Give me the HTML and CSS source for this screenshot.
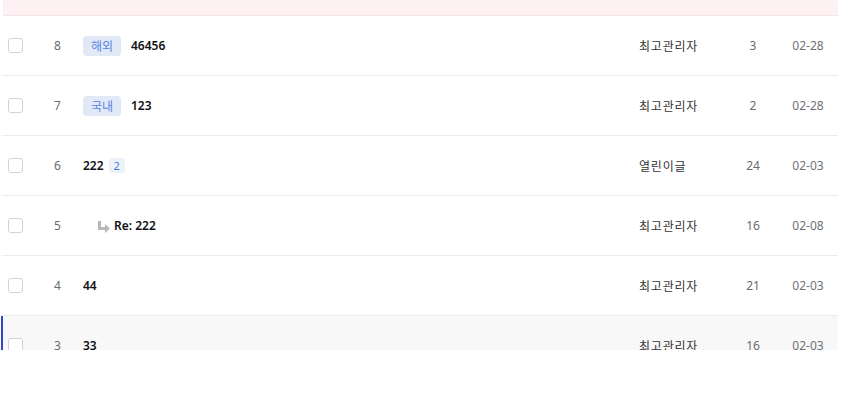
FILE: index.html
```html
<!DOCTYPE html>
<html lang="ko">
<head>
<meta charset="utf-8">
<link rel="stylesheet" href="styles.css">
</head>
<body>
<div class="board">
  <div class="list">
    <div class="head"></div>
    <div class="row">
      <div class="c-chk"><span class="chk"></span></div>
      <div class="c-num">8</div>
      <div class="c-title"><span class="cat">해외</span><span class="subj">46456</span></div>
      <div class="c-author">최고관리자</div>
      <div class="c-hit">3</div>
      <div class="c-date">02-28</div>
    </div>
    <div class="row">
      <div class="c-chk"><span class="chk"></span></div>
      <div class="c-num">7</div>
      <div class="c-title"><span class="cat">국내</span><span class="subj">123</span></div>
      <div class="c-author">최고관리자</div>
      <div class="c-hit">2</div>
      <div class="c-date">02-28</div>
    </div>
    <div class="row">
      <div class="c-chk"><span class="chk"></span></div>
      <div class="c-num">6</div>
      <div class="c-title"><span class="subj">222</span><span class="cmt">2</span></div>
      <div class="c-author">열린이글</div>
      <div class="c-hit">24</div>
      <div class="c-date">02-03</div>
    </div>
    <div class="row">
      <div class="c-chk"><span class="chk"></span></div>
      <div class="c-num">5</div>
      <div class="c-title reply"><svg class="re-ico" width="13" height="12" viewBox="0 0 13 12"><path d="M1 0h3v6h4V3l5 4.5-5 4.5V9H1z" fill="#b8b8b8"/></svg><span class="subj">Re: 222</span></div>
      <div class="c-author">최고관리자</div>
      <div class="c-hit">16</div>
      <div class="c-date">02-08</div>
    </div>
    <div class="row">
      <div class="c-chk"><span class="chk"></span></div>
      <div class="c-num">4</div>
      <div class="c-title"><span class="subj">44</span></div>
      <div class="c-author">최고관리자</div>
      <div class="c-hit">21</div>
      <div class="c-date">02-03</div>
    </div>
    <div class="row active">
      <div class="c-chk"><span class="chk"></span></div>
      <div class="c-num">3</div>
      <div class="c-title"><span class="subj">33</span></div>
      <div class="c-author">최고관리자</div>
      <div class="c-hit">16</div>
      <div class="c-date">02-03</div>
    </div>
  </div>
</div>
</body>
</html>
```

FILE: styles.css
```css
* { box-sizing: border-box; }
html, body { margin: 0; padding: 0; background: #fff; }
body {
  font-family: "Noto Sans", "Noto Sans CJK KR", sans-serif;
  font-size: 12px;
  color: #333;
}
.board {
  width: 843px;
  height: 350px;
  overflow: hidden;
}
.list {
  margin-left: 1px;
  width: 837px;
}
.head {
  height: 16px;
  margin-left: 2px;
  background: #fdf1f4;
  border-bottom: 1px solid #f5e4e9;
}
.row {
  display: grid;
  grid-template-columns: 30px 48px 558px 89px 50px 60px;
  align-items: center;
  height: 60px;
  border-left: 2px solid transparent;
  border-bottom: 1px solid #ececec;
}
.row.active {
  border-left-color: #3346c8;
  background: #f8f8f8;
}
.c-chk { padding-left: 5px; display: flex; align-items: center; }
.chk {
  width: 15px;
  height: 15px;
  border: 1px solid #cfd2da;
  border-radius: 3px;
  background: #fff;
}
.c-num, .c-hit, .c-date { text-align: center; color: #6b6b6b; }
.c-num { padding-left: 1px; }
.c-date { color: #6f6f78; }
.c-title {
  padding-left: 2px;
  display: flex;
  align-items: center;
}
.cat {
  display: inline-flex;
  align-items: center;
  justify-content: center;
  width: 38px;
  height: 20px;
  border-radius: 4px;
  background: #e2e9f6;
  color: #5a86e8;
  font-size: 12px;
  margin-right: 10px;
}
.subj {
  font-weight: 600;
  color: #111;
}
.cmt {
  display: inline-flex;
  align-items: center;
  justify-content: center;
  width: 16px;
  height: 15px;
  margin-left: 5px;
  border-radius: 3px;
  background: #edf1f8;
  color: #3d7cf0;
  font-size: 11px;
}
.reply { padding-left: 16px; }
.re-ico { margin-right: 4px; margin-top: 3px; }
.c-author { color: #333; letter-spacing: 0.8px; }
```
